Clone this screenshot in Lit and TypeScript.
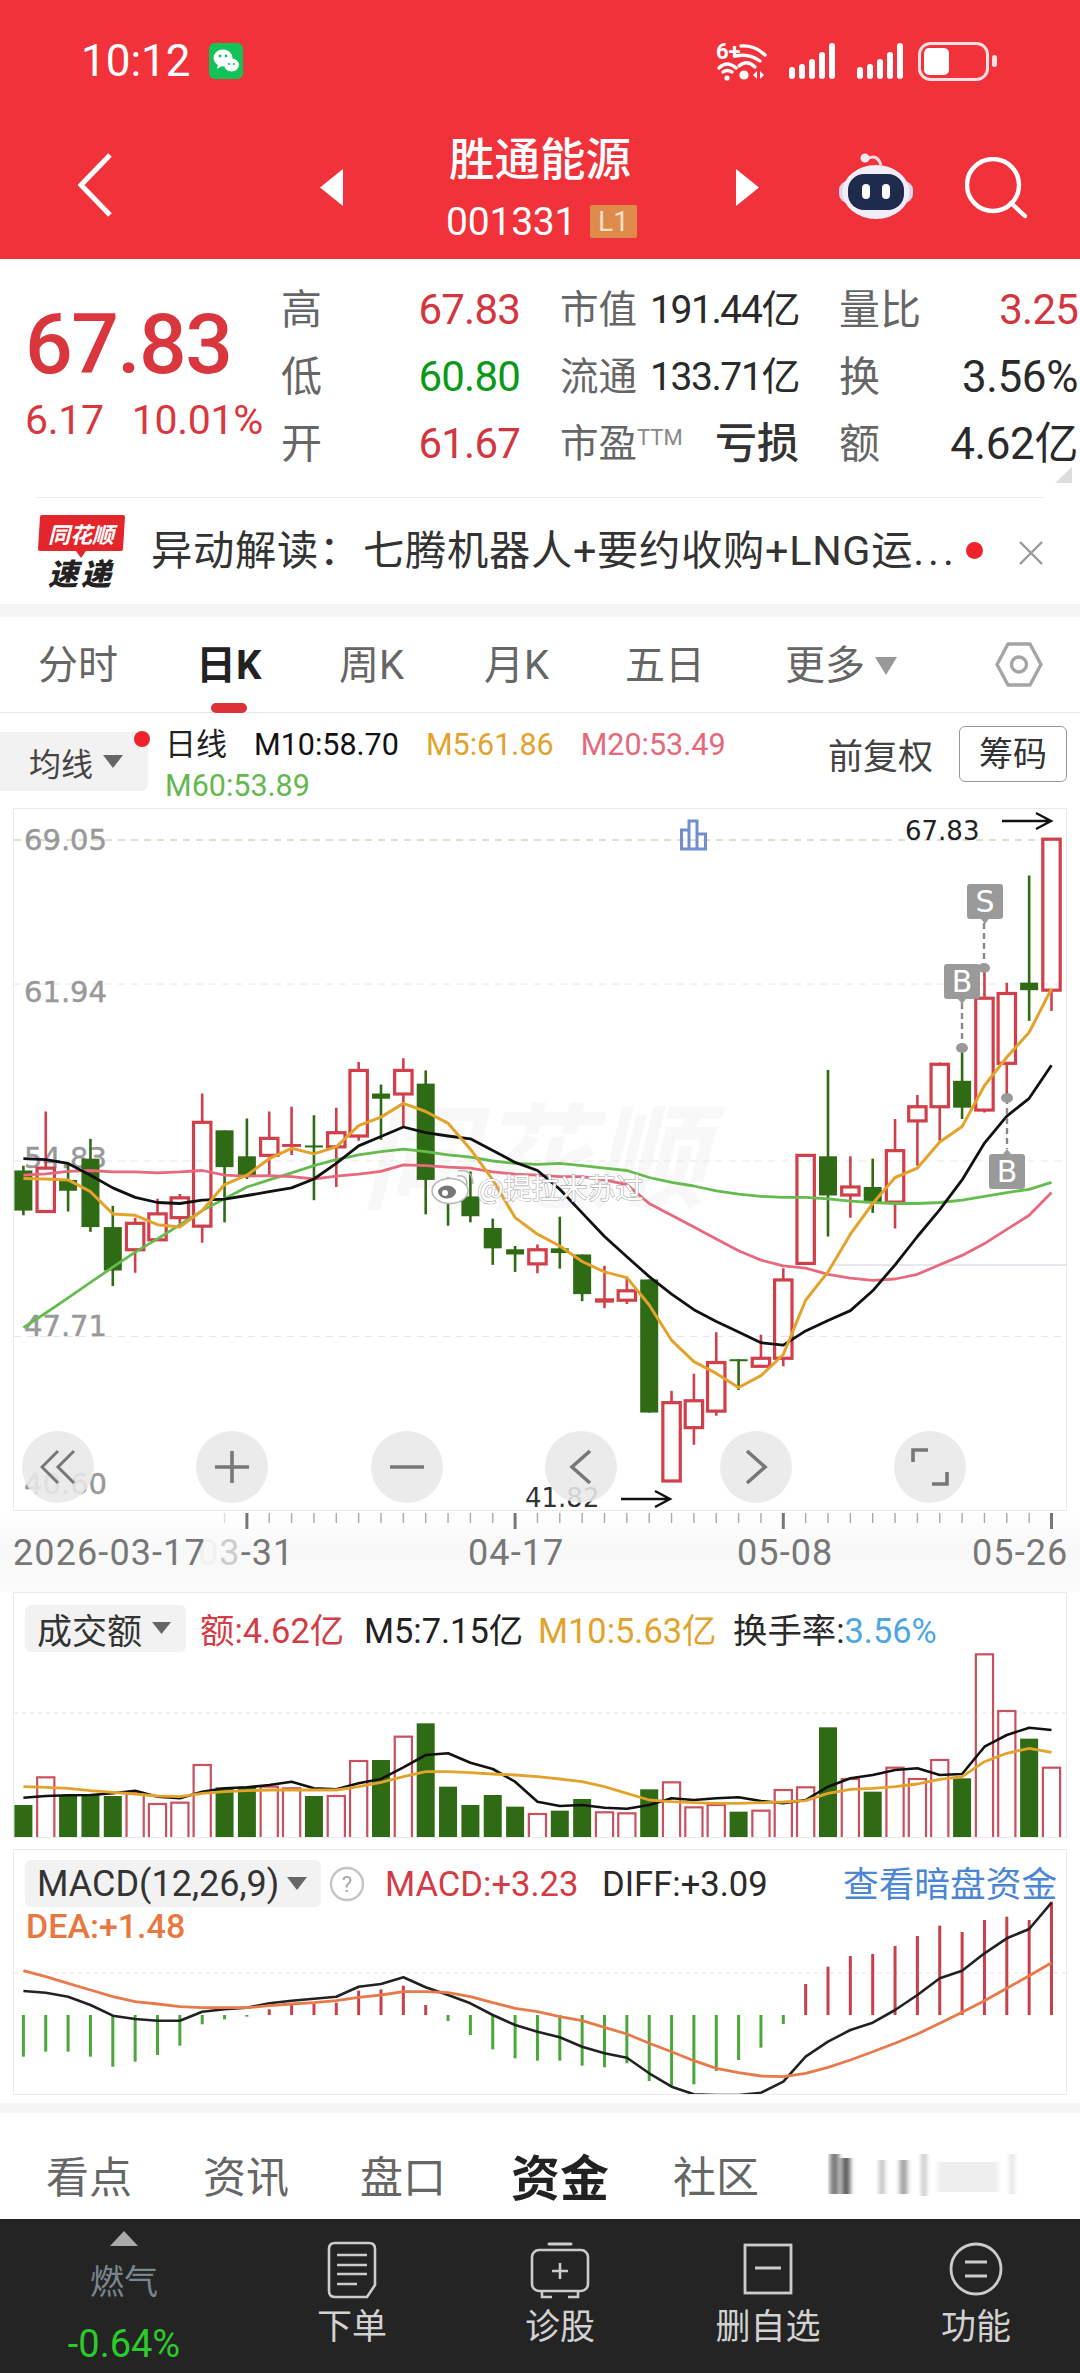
import { LitElement, html, css, svg } from "lit";
import { customElement } from "lit/decorators.js";

const X = (i: number) => 23.4 + 22.35 * i;
const KY = (z: number) => 800 + z / 2.119;
const LY = (z: number) => 1580 + z / 3;
const pts = (a: number[], f: (z: number) => number) =>
  a.map((z, i) => `${X(i).toFixed(1)},${f(z).toFixed(1)}`).join(" ");

// [hi, bodyTop, bodyBottom, lo, isRed]
const K: [number, number, number, number, number][] = [
  [775, 785, 870, 880, 0], [660, 780, 872, 872, 1], [770, 805, 828, 872, 0], [718, 760, 905, 915, 0],
  [860, 905, 997, 1030, 0], [885, 897, 953, 1002, 1], [845, 877, 932, 932, 1], [835, 843, 885, 898, 1],
  [622, 683, 903, 938, 1], [700, 700, 778, 895, 0], [675, 755, 795, 803, 0], [660, 717, 753, 795, 1],
  [650, 731, 733, 752, 1], [668, 732, 734, 848, 0], [652, 705, 735, 820, 1], [555, 573, 712, 722, 1],
  [603, 622, 633, 720, 0], [547, 573, 623, 693, 1], [573, 601, 805, 878, 0], [800, 810, 848, 902, 0],
  [787, 840, 882, 895, 0], [887, 907, 950, 985, 0], [945, 952, 963, 1000, 0], [942, 953, 983, 1003, 1],
  [883, 950, 960, 993, 0], [963, 963, 1047, 1062, 0], [987, 1058, 1063, 1077, 1], [1010, 1040, 1060, 1068, 1],
  [1016, 1016, 1298, 1298, 0], [1252, 1277, 1443, 1443, 1], [1216, 1273, 1330, 1366, 1], [1128, 1192, 1295, 1305, 1],
  [1185, 1185, 1189, 1250, 0], [1133, 1183, 1200, 1200, 1], [992, 1017, 1183, 1200, 1], [753, 753, 982, 982, 1],
  [572, 755, 838, 925, 0], [755, 820, 837, 885, 1], [760, 820, 852, 875, 0], [676, 743, 852, 908, 1],
  [625, 650, 680, 775, 1], [556, 560, 650, 722, 1], [527, 595, 652, 676, 0], [360, 420, 657, 662, 1],
  [387, 410, 558, 632, 1], [160, 387, 403, 468, 0], [83, 83, 403, 447, 1],
];
const M10 = [760, 762, 770, 795, 822, 842, 853, 855, 848, 846, 838, 830, 822, 803, 770, 733, 713, 693, 705, 712, 718, 743, 768, 785, 825, 875, 925, 968, 1010, 1047, 1080, 1105, 1127, 1150, 1155, 1125, 1103, 1082, 1040, 985, 925, 868, 805, 727, 670, 632, 562];
const M5 = [802, 803, 805, 830, 877, 880, 900, 905, 870, 815, 795, 760, 738, 750, 735, 690, 672, 643, 660, 685, 740, 805, 885, 920, 945, 978, 1000, 1012, 1070, 1145, 1190, 1215, 1245, 1220, 1175, 1060, 1000, 920, 855, 800, 780, 725, 692, 605, 545, 492, 400];
const M20 = [795, 792, 787, 785, 788, 788, 790, 788, 785, 795, 797, 796, 798, 803, 797, 793, 787, 773, 775, 778, 780, 788, 793, 795, 798, 798, 805, 815, 855, 880, 905, 930, 955, 975, 987, 992, 1005, 1013, 1018, 1015, 1005, 985, 965, 940, 910, 880, 832];
const M60 = [1118, 1087, 1055, 1022, 990, 958, 930, 900, 870, 845, 820, 805, 790, 775, 762, 752, 745, 740, 745, 752, 757, 765, 770, 772, 770, 775, 780, 785, 800, 810, 818, 828, 835, 840, 842, 842, 845, 850, 853, 855, 855, 853, 848, 840, 832, 825, 810];

const VOL: [number, number][] = [
  [675, 0], [592, 1], [648, 0], [645, 0], [648, 0], [640, 1], [672, 1], [668, 1], [555, 1], [622, 0], [620, 0], [620, 1], [625, 1], [648, 0], [648, 1], [543, 1],
  [540, 0], [470, 1], [430, 0], [620, 0], [675, 0], [645, 0], [680, 0], [702, 1], [692, 0], [657, 0], [697, 1], [700, 1], [628, 0], [607, 1], [682, 1], [675, 1],
  [695, 0], [692, 1], [630, 1], [622, 1], [442, 0], [597, 1], [635, 0], [563, 1], [597, 1], [540, 1], [595, 0], [223, 1], [393, 1], [476, 0], [563, 1],
];
const VM5 = [653, 648, 646, 645, 640, 632, 650, 655, 635, 625, 622, 615, 605, 625, 628, 610, 597, 562, 525, 520, 548, 567, 605, 665, 678, 675, 683, 686, 675, 655, 660, 655, 652, 663, 670, 660, 620, 595, 585, 570, 565, 585, 582, 500, 465, 443, 450];
const VM10 = [620, 622, 625, 632, 637, 642, 648, 650, 640, 635, 632, 630, 630, 630, 630, 620, 607, 590, 575, 575, 578, 582, 585, 590, 597, 605, 620, 640, 660, 665, 668, 670, 670, 668, 666, 662, 640, 628, 625, 620, 612, 598, 590, 545, 520, 505, 517];

const HIST = [1430, 1415, 1415, 1430, 1460, 1445, 1425, 1397, 1333, 1318, 1310, 1288, 1275, 1272, 1268, 1232, 1228, 1217, 1275, 1323, 1365, 1408, 1435, 1442, 1442, 1457, 1462, 1450, 1503, 1517, 1513, 1473, 1440, 1403, 1332, 1212, 1160, 1128, 1122, 1098, 1068, 1037, 1056, 1020, 1010, 1020, 965];
const DIFF = [1233, 1238, 1250, 1275, 1307, 1317, 1322, 1322, 1295, 1288, 1283, 1270, 1262, 1256, 1250, 1220, 1212, 1192, 1222, 1245, 1270, 1305, 1335, 1355, 1372, 1400, 1420, 1433, 1480, 1520, 1543, 1545, 1545, 1538, 1505, 1430, 1385, 1350, 1328, 1290, 1245, 1195, 1172, 1120, 1075, 1047, 968];
const DEA = [1172, 1190, 1210, 1230, 1250, 1265, 1272, 1280, 1283, 1283, 1283, 1277, 1272, 1268, 1262, 1252, 1245, 1235, 1235, 1238, 1250, 1268, 1285, 1295, 1310, 1322, 1342, 1362, 1390, 1415, 1442, 1465, 1478, 1488, 1490, 1480, 1462, 1440, 1415, 1390, 1362, 1330, 1297, 1262, 1225, 1187, 1148];

const RED = "#d1404a";
const GREEN = "#2f6a14";

@customElement("app-root")
export class AppRoot extends LitElement {
  static styles = css`
    :host { display: block; width: 1080px; height: 2373px; overflow: hidden; background: #fff; color: #222;
      font-family: Roboto, "Noto Sans CJK SC", sans-serif; }
    svg { display: block; }
    .head { height: 259px; background: #f2323a; color: #fff; display: flex; flex-direction: column; }
    .status { height: 120px; display: flex; align-items: flex-start; padding: 41px 0 0 81px; box-sizing: border-box; }
    .time { font-size: 44px; line-height: 40px; }
    .wx { margin-left: 18px; margin-top: 2px; }
    .sicons { margin-left: 473px; margin-top: -6px; }
    .nav { height: 139px; display: flex; align-items: flex-start; padding-left: 78px; box-sizing: border-box; position: relative; }
    .back { margin-top: 33px; }
    .tl { margin-left: 208px; margin-top: 49px; }
    .tr { margin-left: 97px; margin-top: 49px; }
    .mid { margin-left: 106px; width: 190px; display: flex; flex-direction: column; }
    .name { font-size: 45.5px; line-height: 50px; margin-top: 16px; white-space: nowrap; letter-spacing: 0; font-weight: 500; }
    .code { display: flex; align-items: center; margin-top: 19px; height: 33px; margin-left: -3px; }
    .code b { font-weight: 400; font-size: 39px; letter-spacing: -.2px; width: 144px; }
    .l1 { width: 47px; height: 33px; background: #dd8a4a; border-radius: 2px; color: #f6e2c8; font-size: 28px; line-height: 33px; text-align: center; }
    .robot { margin-left: 80px; margin-top: 31px; }
    .search { margin-left: 52px; margin-top: 37px; }

    .quote { height: 345px; position: relative; background: #fff; }
    .qtop { display: flex; height: 238px; }
    .big { width: 281px; padding-left: 25px; box-sizing: border-box; color: #d9363e; }
    .price { font-size: 84px; line-height: 100px; margin-top: 36px; letter-spacing: -1.6px; font-weight: 500; }
    .chg { font-size: 41px; line-height: 50px; display: flex; gap: 28px; letter-spacing: -.3px; white-space: nowrap; }
    .qgrid { display: grid; grid-template-columns: repeat(3, 239px); column-gap: 40px; grid-auto-rows: 67px; padding-top: 17px; }
    .cell { display: flex; justify-content: space-between; align-items: center; white-space: nowrap; }
    .lab { font-size: 41px; color: #666; line-height: 50px; }
    .lab2 { font-size: 38.5px; color: #666; line-height: 50px; }
    .ttm { font-size: 22px; color: #888; letter-spacing: 0; vertical-align: 12px; line-height: 0; }
    .v { font-size: 42px; letter-spacing: -.8px; line-height: 50px; }
    .v.r { color: #d3363e; }
    .v.g { color: #0a9a17; }
    .v.k { color: #2a2a2a; font-size: 39px; letter-spacing: -1.4px; }
    .v.k2 { color: #2a2a2a; font-size: 44px; letter-spacing: -.4px; }
    .vb { font-size: 42px; font-weight: 500; color: #333; line-height: 50px; }
    .corner { position: absolute; left: 1055px; top: 208px; }
    .div { height: 1px; background: #ececec; margin: 0 36px 0 36px; }
    .news { display: flex; align-items: center; height: 106px; padding-left: 38px; box-sizing: border-box; position: relative; }
    .logo { margin-top: 8px; }
    .ntext { font-size: 41.3px; color: #333; margin-left: 26px; white-space: nowrap; line-height: 50px; letter-spacing: .7px; }
    .ntext i { font-style: normal; margin-right: 2px; }
    .ntext u { text-decoration: none; letter-spacing: 4px; }
    .ndot { width: 17px; height: 17px; border-radius: 50%; background: #f0222c; position: absolute; left: 966px; top: 44px; }
    .nx { position: absolute; left: 1019px; top: 43px; }
    .band { height: 13px; background: #f5f5f5; }

    .tabs { height: 96px; display: grid; grid-template-columns: 158px 143px 145px 141px 160px 210px auto; padding-left: 38px; padding-top: 24px; box-sizing: border-box; border-bottom: 1px solid #e6e6e6; position: relative; font-size: 40px; line-height: 50px; color: #666; }
    .tabs .on { color: #222; font-weight: 700; }
    .tabs .more { display: flex; align-items: center; gap: 10px; height: 50px; }
    .bar { position: absolute; left: 211px; top: 86px; width: 36px; height: 10px; border-radius: 5px; background: #dc3136; }
    .hex { margin-top: 1px; }

    .ctrl { height: 95px; display: flex; align-items: flex-start; position: relative; }
    .ma { width: 148px; height: 59px; margin-top: 19px; background: #f2f2f2; border-radius: 0 6px 6px 0; display: flex; align-items: center; font-size: 32px; color: #444; padding-left: 29px; box-sizing: border-box; gap: 10px; }
    .mad { position: absolute; left: 134px; top: 18px; width: 16px; height: 16px; border-radius: 50%; background: #f0222c; }
    .leg { margin-left: 17px; padding-top: 11px; display: flex; flex-direction: column; font-size: 30.5px; line-height: 41px; }
    .legr { display: flex; gap: 27px; white-space: nowrap; }
    .legr .d { font-size: 31px; color: #222; }
    .m10 { color: #111; } .m5 { color: #e2a32c; } .m20 { color: #e5697b; } .m60 { color: #64b850; }
    .adj { position: absolute; left: 828px; top: 24px; font-size: 35px; line-height: 42px; color: #444; white-space: nowrap; }
    .chip { position: absolute; left: 959px; top: 13px; width: 108px; height: 56px; border: 1px solid #999; border-radius: 6px; box-sizing: border-box; font-size: 34px; line-height: 54px; text-align: center; color: #333; }

    .pane { margin: 0 13px; border: 1px solid #e9e9e9; position: relative; box-sizing: border-box; }
    .kpane { height: 703px; }
    .ksvg { margin-bottom: -6px; }
    .btns { position: absolute; left: 8px; top: 622px; display: flex; gap: 102.4px; }
    .cb { width: 72px; height: 72px; border-radius: 50%; background: rgba(232,232,232,.88); display: flex; align-items: center; justify-content: center; }

    .axis { height: 81px; background: linear-gradient(#fff, #f8f8f8 50%, #fbfbfb); }
    .axl { display: grid; grid-template-columns: 185px 270px 269px 235px auto; padding-left: 13px; margin-top: 2px; font-size: 36px; line-height: 40px; letter-spacing: 1.1px; color: #777; white-space: nowrap; }
    .axl .s { grid-column: 1; grid-row: 1; position: relative; z-index: 1; }
    .f0 { color: #f1f1f1; } .f1 { color: #cdcdcd; }

    .stack { display: grid; }
    .stack > * { grid-area: 1 / 1; }
    .vpane { height: 246px; }
    .mpane { height: 246px; margin-top: 11px; }
    .ph { position: relative; z-index: 1; padding: 10px 0 0 11px; }
    .vh { display: grid; grid-template-columns: 175px 164px 174px 195px auto; align-items: center; font-size: 34.4px; white-space: nowrap; height: 47px; }
    .sel { background: #f2f2f2; border-radius: 6px; height: 47px; width: 161px; display: flex; align-items: center; padding-left: 12px; box-sizing: border-box; font-size: 35px; color: #333; gap: 10px; }
    .red { color: #d33b45; } .blue { color: #4da6e0; } .dk { color: #2a2a2a; }
    .m10o { color: #e2a32c; }
    .mh { display: flex; align-items: center; font-size: 34.6px; white-space: nowrap; height: 47px; position: relative; }
    .msel { width: 296px; font-size: 36px; gap: 8px; }
    .q { margin-left: 8px; }
    .mh .a { margin-left: 20px; width: 217px; }
    .link { position: absolute; left: 818px; color: #4a86d4; font-size: 35.7px; top: 4px; line-height: 42px; }
    .dea { color: #e8783f; font-size: 34px; line-height: 34px; margin-top: 2px; padding-left: 1px; font-weight: 500; }

    .gapw { height: 8px; }
    .band2 { height: 10px; background: #f5f5f5; }
    .btabs { height: 106px; display: grid; grid-template-columns: 157px 157px 151px 162px 155px auto; align-items: center; padding: 16px 0 0 46px; box-sizing: border-box; font-size: 43px; color: #666; }
    .btabs .on { font-size: 49px; font-weight: 700; color: #222; }

    .foot { height: 154px; background: #242424; display: grid; grid-template-columns: 248px repeat(4, 208px); color: #d2d2d2; }
    .fc { display: flex; flex-direction: column; align-items: center; padding-top: 22px; }
    .fc span { font-size: 35px; line-height: 42px; margin-top: 8px; }
    .f-l { display: flex; flex-direction: column; align-items: center; padding-top: 12px; }
    .gasn { color: #7b858c; font-size: 34px; line-height: 40px; margin-top: 16px; }
    .gasv { color: #2ccb2c; font-size: 38px; line-height: 40px; margin-top: 22px; }
  `;

  private tri(w: number, h: number, c: string) {
    return svg`<svg width=${w} height=${h} viewBox="0 0 10 10" preserveAspectRatio="none"><path d="M0 0H10L5 10Z" fill=${c}/></svg>`;
  }

  private statusIcons() {
    const bars = (x0: number) => [0, 1, 2, 3, 4].map((k) => {
      const top = [67, 64, 59, 52, 43][k];
      return svg`<rect x=${x0 + k * 10} y=${top} width="6" height=${79 - top} rx="3" fill="#fff"/>`;
    });
    return svg`<svg class="sicons" width="281" height="48" viewBox="716 35 281 48">
      <text x="716" y="59" font-size="22" font-weight="700" fill="#fff">6+</text>
      <g fill="none" stroke="#fff" stroke-width="3.4" stroke-linecap="round">
        <path d="M741 46Q755 45 765 55"/><path d="M735 56Q749 53 760 61"/>
        <path d="M719 68Q727 60 736 68"/><path d="M723 72Q727 69 732 72"/>
        <path d="M739 66Q747 59 755 67"/>
      </g>
      <circle cx="727" cy="78" r="2.6" fill="#fff"/><circle cx="744" cy="75" r="4.6" fill="#fff"/>
      <path d="M757 71L753 75L757 79ZM760 71L764 75L760 79Z" fill="#fff"/>
      ${bars(789)}${bars(857)}
      <rect x="919.5" y="43.5" width="68" height="36" rx="11" fill="none" stroke="#fff" stroke-opacity=".85" stroke-width="3"/>
      <rect x="924" y="48" width="25" height="27" rx="5" fill="#fff"/>
      <rect x="992" y="55" width="5" height="12" rx="2.5" fill="#fff" fill-opacity=".85"/>
    </svg>`;
  }

  private kChart() {
    const candle = (d: [number, number, number, number, number], i: number) => {
      const x = X(i);
      const [h, t, b, l, r] = d;
      if (r) {
        return svg`<path d="M${x} ${KY(h)}V${KY(t)}M${x} ${KY(b)}V${KY(l)}" stroke=${RED} stroke-width="2.6"/>
          ${b - t < 6
            ? svg`<rect x=${x - 9.5} y=${KY(t) - 1} width="19" height=${KY(b) - KY(t) + 2} fill=${RED}/>`
            : svg`<rect x=${x - 8.7} y=${KY(t)} width="17.4" height=${KY(b) - KY(t)} fill="none" stroke=${RED} stroke-width="3.2"/>`}`;
      }
      return svg`<path d="M${x} ${KY(h)}V${KY(l)}" stroke=${GREEN} stroke-width="2.6"/>
        <rect x=${x - 9} y=${KY(t)} width="18" height=${Math.max(KY(b) - KY(t), 2)} fill=${GREEN}/>`;
    };
    const lab = (s: string, y: number) => svg`<text x="24" y=${y} font-family="DejaVu Sans" font-size="29" stroke="#999" stroke-width=".5" fill="#999">${s}</text>`;
    const grid = (y: number, c: string) => svg`<line x1="14" x2="1066" y1=${y} y2=${y} stroke=${c} stroke-width="1" stroke-dasharray="7 6"/>`;
    const badge = (x: number, y: number, c: string, up: boolean) => svg`
      <path d=${up
        ? `M${x - 18} ${y + 3}q0 -3 3 -3h${11}l4 -5l4 5h${11}q3 0 3 3v29q0 3 -3 3h-30q-3 0 -3 -3Z`
        : `M${x - 18} ${y + 3}q0 -3 3 -3h30q3 0 3 3v29q0 3 -3 3h-11l-4 5l-4 -5h-11q-3 0 -3 -3Z`}" fill="#9a9a9a"/>
      <text x=${x} y=${y + 28} text-anchor="middle" font-family="DejaVu Sans" font-size="30" fill="#fff">${c}</text>`;
    return svg`<svg class="ksvg" width="1052" height="707" viewBox="14 809 1052 707">
      <text x="361" y="1200" font-family="Noto Sans CJK SC" font-weight="700" font-size="115" font-style="italic" fill="#f8f8f8">同花顺</text>
      ${grid(840, "#cbb89c")}${grid(984, "#e6e6e6")}${grid(1161, "#e6e6e6")}${grid(1336.5, "#e6e6e6")}
      <line x1="830" x2="1066" y1="1265" y2="1265" stroke="#e7e7ee" stroke-width="2"/>
      ${lab("69.05", 850)}${lab("61.94", 1002)}${lab("54.83", 1168)}${lab("47.71", 1336)}${lab("40.60", 1494)}
      ${K.map(candle)}
      <polyline points=${pts(M60, KY)} fill="none" stroke="#66bb4f" stroke-width="2.8" stroke-linejoin="round"/>
      <polyline points=${pts(M20, KY)} fill="none" stroke="#e8697e" stroke-width="2.8" stroke-linejoin="round"/>
      <polyline points=${pts(M10, KY)} fill="none" stroke="#111" stroke-width="2.8" stroke-linejoin="round"/>
      <polyline points=${pts(M5, KY)} fill="none" stroke="#e3a32b" stroke-width="3" stroke-linejoin="round"/>
      <path d="M681.5 830h7.5v19h-7.5zM689 821h8v28h-8zM697 834h8.5v15h-8.5z" fill="none" stroke="#6f8fd0" stroke-width="3"/>
      <text x="905" y="840" font-family="DejaVu Sans" font-size="26" fill="#222">67.83</text>
      <path d="M1002 821H1051M1036 813L1051 821L1036 829" fill="none" stroke="#111" stroke-width="2.4"/>
      <text x="525" y="1507" font-family="DejaVu Sans" font-size="26" fill="#333">41.82</text>
      <path d="M621 1499H670M655 1491L670 1499L655 1507" fill="none" stroke="#111" stroke-width="2.4"/>
      <g stroke="#8a8a8a" stroke-width="2.4" stroke-dasharray="6 4">
        <line x1="984" x2="984" y1="923" y2="967"/><line x1="962" x2="962" y1="1003" y2="1048"/><line x1="1007" x2="1007" y1="1098" y2="1149"/>
      </g>
      <ellipse cx="984" cy="968" rx="6" ry="5" fill="#999"/><ellipse cx="962" cy="1048" rx="6" ry="5" fill="#999"/><ellipse cx="1007" cy="1098" rx="6" ry="5" fill="#999"/>
      ${badge(985, 884, "S", false)}${badge(962, 964, "B", false)}${badge(1007, 1154, "B", true)}
      <g fill="none" stroke="#b5b5b5" stroke-width="1.5">
        <ellipse cx="450" cy="1191" rx="18" ry="12.5" fill="#fff"/>
        <path d="M457 1176q10 -2 10 9M458 1171q14 -3 15 13"/>
      </g>
      <ellipse cx="447" cy="1192" rx="9" ry="6.5" fill="#777"/><circle cx="445" cy="1193" r="3" fill="#fff"/>
      <text x="477" y="1199" font-family="Noto Sans CJK SC" font-size="28" fill="#fff" stroke="#aaa" stroke-width="1.2" paint-order="stroke">@提拉米苏过</text>
    </svg>`;
  }

  private ticks() {
    const ls = [];
    for (let i = 9; i <= 46; i++) {
      const long = (i - 10) % 12 === 0;
      const c = i === 9 ? "#ddd" : long ? "#777" : "#aaa";
      ls.push(svg`<line x1=${X(i)} x2=${X(i)} y1="2" y2=${long ? 18 : 12} stroke=${c} stroke-width=${long ? 3 : 1.4}/>`);
    }
    return svg`<svg width="1080" height="20" viewBox="0 0 1080 20">${ls}</svg>`;
  }

  private volChart() {
    const base = LY(772);
    return svg`<svg width="1052" height="244" viewBox="14 1593 1052 244">
      <line x1="14" x2="1066" y1="1713" y2="1713" stroke="#e4e4e4" stroke-dasharray="4 4"/>
      ${VOL.map(([z, r], i) => r
        ? svg`<rect x=${X(i) - 8.6} y=${LY(z)} width="17.2" height=${base - LY(z) + 1} fill="none" stroke="#c9515f" stroke-width="2.2"/>`
        : svg`<rect x=${X(i) - 9} y=${LY(z)} width="18" height=${base - LY(z) + 2} fill=${GREEN}/>`)}
      <polyline points=${pts(VM5, LY)} fill="none" stroke="#111" stroke-width="2.6" stroke-linejoin="round"/>
      <polyline points=${pts(VM10, LY)} fill="none" stroke="#e3a32b" stroke-width="2.8" stroke-linejoin="round"/>
    </svg>`;
  }

  private macdChart() {
    const zero = LY(1305);
    return svg`<svg width="1052" height="244" viewBox="14 1850 1052 244">
      <line x1="14" x2="1066" y1="1973" y2="1973" stroke="#e4e4e4" stroke-dasharray="4 4"/>
      ${HIST.map((z, i) => svg`<line x1=${X(i)} x2=${X(i)} y1=${zero} y2=${LY(z)} stroke=${z < 1305 ? "#c9404a" : "#4aa83a"} stroke-width="3"/>`)}
      <polyline points=${pts(DIFF, LY)} fill="none" stroke="#222" stroke-width="2.6" stroke-linejoin="round"/>
      <polyline points=${pts(DEA, LY)} fill="none" stroke="#e8794a" stroke-width="2.8" stroke-linejoin="round"/>
    </svg>`;
  }

  render() {
    return html`
      <div class="head">
        <div class="status">
          <span class="time">10:12</span>
          <svg class="wx" width="34" height="36" viewBox="0 0 34 36">
            <rect width="34" height="36" rx="6" fill="#12c35a"/>
            <ellipse cx="14" cy="15" rx="9.5" ry="8.5" fill="#fff"/>
            <ellipse cx="22.5" cy="22" rx="7.5" ry="6.5" fill="#fff"/>
            <path d="M9 21L8 26L13 23Z" fill="#fff"/>
            <circle cx="11" cy="13" r="1.4" fill="#12c35a"/><circle cx="17" cy="13" r="1.4" fill="#12c35a"/>
            <circle cx="20" cy="21" r="1.1" fill="#12c35a"/><circle cx="25" cy="21" r="1.1" fill="#12c35a"/>
          </svg>
          ${this.statusIcons()}
        </div>
        <div class="nav">
          <svg class="back" width="34" height="64" viewBox="0 0 34 64"><path d="M32 2L3 32L32 62" fill="none" stroke="#fff" stroke-width="5"/></svg>
          <svg class="tl" width="23" height="37" viewBox="0 0 23 37"><path d="M23 0V37L0 18.5Z" fill="#fff"/></svg>
          <div class="mid">
            <div class="name">胜通能源</div>
            <div class="code"><b>001331</b><span class="l1">L1</span></div>
          </div>
          <svg class="tr" width="23" height="37" viewBox="0 0 23 37"><path d="M0 0V37L23 18.5Z" fill="#fff"/></svg>
          <svg class="robot" width="74" height="68" viewBox="0 0 74 68">
            <path d="M28 8Q38 2 42 14" fill="none" stroke="#f5d9e0" stroke-width="3"/>
            <circle cx="26" cy="7" r="4.5" fill="#f3e9f2"/>
            <rect x="0" y="30" width="74" height="22" rx="9" fill="#d9d5ee"/>
            <ellipse cx="37" cy="41" rx="33.5" ry="27" fill="#f1edf9"/>
            <rect x="9" y="23" width="56" height="36" rx="16" fill="#1f2b4d"/>
            <rect x="23" y="33" width="8" height="15" rx="4" fill="#fff"/>
            <rect x="43" y="33" width="8" height="15" rx="4" fill="#fff"/>
          </svg>
          <svg class="search" width="62" height="62" viewBox="0 0 62 62">
            <circle cx="28" cy="28" r="26" fill="none" stroke="#fff" stroke-width="4.4"/>
            <path d="M46 46L60 59" stroke="#fff" stroke-width="4.4" stroke-linecap="round"/>
          </svg>
        </div>
      </div>

      <div class="quote">
        <div class="qtop">
          <div class="big">
            <div class="price">67.83</div>
            <div class="chg"><span>6.17</span><span>10.01%</span></div>
          </div>
          <div class="qgrid">
            <div class="cell"><span class="lab">高</span><span class="v r">67.83</span></div>
            <div class="cell"><span class="lab2">市值</span><span class="v k">191.44亿</span></div>
            <div class="cell"><span class="lab">量比</span><span class="v r">3.25</span></div>
            <div class="cell"><span class="lab">低</span><span class="v g">60.80</span></div>
            <div class="cell"><span class="lab2">流通</span><span class="v k">133.71亿</span></div>
            <div class="cell"><span class="lab">换</span><span class="v k2">3.56%</span></div>
            <div class="cell"><span class="lab">开</span><span class="v r">61.67</span></div>
            <div class="cell"><span class="lab2">市盈<span class="ttm">TTM</span></span><span class="vb">亏损</span></div>
            <div class="cell"><span class="lab">额</span><span class="v k2">4.62亿</span></div>
          </div>
        </div>
        <svg class="corner" width="17" height="16" viewBox="0 0 17 16"><path d="M17 0V16H0Z" fill="#ddd"/></svg>
        <div class="div"></div>
        <div class="news">
          <svg class="logo" width="87" height="80" viewBox="0 0 87 80">
            <path d="M4 0H85Q87 0 87 2L85 34Q85 36 83 36H48L43 43L38 36H2Q0 36 0 34L2 2Q2 0 4 0Z" fill="#e2262c"/>
            <text x="10" y="28" font-family="Noto Sans CJK SC" font-size="22" font-weight="700" font-style="italic" fill="#fff">同花顺</text>
            <text x="10" y="70" font-family="Noto Sans CJK SC" font-size="30" font-weight="900" font-style="italic" fill="#222" letter-spacing="3">速递</text>
          </svg>
          <div class="ntext"><i>异动解读：</i>七腾机器人+要约收购+LNG运<u>...</u></div>
          <span class="ndot"></span>
          <svg class="nx" width="24" height="24" viewBox="0 0 24 24"><path d="M1 1L23 23M23 1L1 23" stroke="#999" stroke-width="2.4"/></svg>
        </div>
      </div>
      <div class="band"></div>

      <div class="tabs">
        <span>分时</span><span class="on">日K</span><span>周K</span><span>月K</span><span>五日</span>
        <span class="more">更多${this.tri(22, 18, "#999")}</span>
        <svg class="hex" width="48" height="45" viewBox="0 0 48 45">
          <path d="M13 2H35L46 22.5L35 43H13L2 22.5Z" fill="none" stroke="#a5a5a5" stroke-width="3.4" stroke-linejoin="round"/>
          <circle cx="24" cy="22.5" r="7.5" fill="none" stroke="#a5a5a5" stroke-width="3.4"/>
        </svg>
        <span class="bar"></span>
      </div>

      <div class="ctrl">
        <div class="ma">均线${this.tri(20, 13, "#666")}</div>
        <span class="mad"></span>
        <div class="leg">
          <div class="legr"><span class="d">日线</span><span class="m10">M10:58.70</span><span class="m5">M5:61.86</span><span class="m20">M20:53.49</span></div>
          <div class="legr"><span class="m60">M60:53.89</span></div>
        </div>
        <span class="adj">前复权</span>
        <span class="chip">筹码</span>
      </div>

      <div class="pane kpane">
        ${this.kChart()}
        <div class="btns">
          <span class="cb"><svg width="36" height="36" viewBox="0 0 36 36"><path d="M18 2L2 18L18 34M34 2L18 18L34 34" fill="none" stroke="#777" stroke-width="3"/></svg></span>
          <span class="cb"><svg width="36" height="36" viewBox="0 0 36 36"><path d="M1 18H35M18 2V34" fill="none" stroke="#777" stroke-width="3.6"/></svg></span>
          <span class="cb"><svg width="36" height="36" viewBox="0 0 36 36"><path d="M1 18H35" fill="none" stroke="#777" stroke-width="3.6"/></svg></span>
          <span class="cb"><svg width="24" height="36" viewBox="0 0 24 36"><path d="M21 2L3 18L21 34" fill="none" stroke="#777" stroke-width="3.6"/></svg></span>
          <span class="cb"><svg width="24" height="36" viewBox="0 0 24 36"><path d="M3 2L21 18L3 34" fill="none" stroke="#777" stroke-width="3.6"/></svg></span>
          <span class="cb"><svg width="38" height="38" viewBox="0 0 38 38"><path d="M2 14V2H17M36 24V36H21" fill="none" stroke="#777" stroke-width="3.6"/></svg></span>
        </div>
      </div>

      <div class="axis">
        ${this.ticks()}
        <div class="axl">
          <span class="s">2026-03-17</span>
          <span><span class="f0">0</span><span class="f1">3</span>-31</span>
          <span>04-17</span><span>05-08</span><span>05-26</span>
        </div>
      </div>

      <div class="pane vpane stack">
        ${this.volChart()}
        <div class="ph">
          <div class="vh">
            <div class="sel">成交额${this.tri(19, 12, "#666")}</div>
            <span class="red">额:4.62亿</span>
            <span>M5:7.15亿</span>
            <span class="m10o">M10:5.63亿</span>
            <span><span class="dk">换手率:</span><span class="blue">3.56%</span></span>
          </div>
        </div>
      </div>

      <div class="pane mpane stack">
        ${this.macdChart()}
        <div class="ph">
          <div class="mh">
            <div class="sel msel">MACD(12,26,9)${this.tri(20, 13, "#666")}</div>
            <svg class="q" width="36" height="36" viewBox="0 0 36 36"><circle cx="18" cy="18" r="16" fill="none" stroke="#c5c5c5" stroke-width="2.4"/><text x="18" y="26" text-anchor="middle" font-size="22" fill="#aaa">?</text></svg>
            <span class="a red">MACD:+3.23</span>
            <span class="dk">DIFF:+3.09</span>
            <span class="link">查看暗盘资金</span>
          </div>
          <div class="dea">DEA:+1.48</div>
        </div>
      </div>

      <div class="gapw"></div>
      <div class="band2"></div>
      <div class="btabs">
        <span>看点</span><span>资讯</span><span>盘口</span><span class="on">资金</span><span>社区</span>
        <svg width="190" height="44" viewBox="0 0 190 44">
          <defs><filter id="mb" x="-20%" y="-10%" width="140%" height="120%"><feGaussianBlur stdDeviation="2.5 0.3"/></filter></defs>
          <g filter="url(#mb)" fill="#777">
            <rect x="2" y="2" width="9" height="40"/><rect x="14" y="6" width="8" height="36" fill="#555"/>
            <rect x="52" y="8" width="4" height="34" fill="#aaa"/><rect x="72" y="8" width="7" height="34" fill="#999"/>
            <rect x="95" y="2" width="2" height="42"/><rect x="110" y="10" width="60" height="30" fill="#eee"/>
            <rect x="183" y="2" width="2" height="40" fill="#bbb"/>
          </g>
        </svg>
      </div>

      <div class="foot">
        <div class="f-l">
          <svg width="28" height="15" viewBox="0 0 28 15"><path d="M14 0L28 15H0Z" fill="#aaa"/></svg>
          <span class="gasn">燃气</span>
          <span class="gasv">-0.64%</span>
        </div>
        <div class="fc">
          <svg width="50" height="58" viewBox="0 0 50 58"><path d="M8 2H42Q48 2 48 8V44L40 56H8Q2 56 2 50V8Q2 2 8 2Z" fill="none" stroke="#ccc" stroke-width="2.6"/><path d="M10 14H40M10 24H40M10 33H40M10 43H30" stroke="#ccc" stroke-width="2.6"/></svg>
          <span>下单</span>
        </div>
        <div class="fc">
          <svg width="60" height="58" viewBox="0 0 60 58"><path d="M19 3H41" stroke="#ccc" stroke-width="3" stroke-linecap="round"/><rect x="2" y="9" width="56" height="41" rx="7" fill="none" stroke="#ccc" stroke-width="2.6"/><path d="M12 50V56H22M38 56H48V50M30 22V38M22 30H38" fill="none" stroke="#ccc" stroke-width="2.6"/></svg>
          <span>诊股</span>
        </div>
        <div class="fc">
          <svg width="50" height="58" viewBox="0 0 50 58"><rect x="2" y="4" width="46" height="48" fill="none" stroke="#ccc" stroke-width="2.8"/><path d="M12 27H38" stroke="#ccc" stroke-width="3"/></svg>
          <span>删自选</span>
        </div>
        <div class="fc">
          <svg width="54" height="58" viewBox="0 0 54 58"><circle cx="27" cy="28" r="25" fill="none" stroke="#ccc" stroke-width="2.8"/><path d="M16 21H38M16 35H38" stroke="#ccc" stroke-width="2.8"/></svg>
          <span>功能</span>
        </div>
      </div>
    `;
  }
}
